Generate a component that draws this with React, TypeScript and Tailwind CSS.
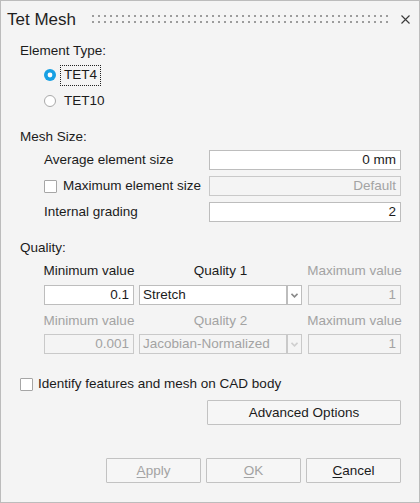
const ink = "text-[#1b1b1b]";
const faded = "text-[#a3a3a3]";

function Field({
  value,
  disabled = false,
  className = "",
}: {
  value: string;
  disabled?: boolean;
  className?: string;
}) {
  return (
    <div
      className={`flex h-[20px] items-center justify-end border pr-[4px] ${
        disabled ? `border-[#c9c9c9] bg-[#f4f4f4] ${faded}` : `border-[#bdbdbd] bg-white ${ink}`
      } ${className}`}
    >
      {value}
    </div>
  );
}

function Chevron({ color }: { color: string }) {
  return (
    <svg width="7" height="5" viewBox="0 0 7 5">
      <path d="M0.5 0.8 L3.5 3.8 L6.5 0.8" fill="none" stroke={color} strokeWidth="1.6" />
    </svg>
  );
}

function Combo({ value, disabled = false }: { value: string; disabled?: boolean }) {
  const box = disabled ? `border-[#c9c9c9] bg-[#f4f4f4] ${faded}` : `border-[#bdbdbd] bg-white ${ink}`;
  return (
    <div className="ml-[5px] flex h-[20px] w-[163px]">
      <div className={`flex w-[148px] items-center border pl-[3px] ${box}`}>{value}</div>
      <div className={`flex w-[15px] items-center justify-center border ${box}`}>
        <Chevron color={disabled ? "#cfcfcf" : "#8a8a8a"} />
      </div>
    </div>
  );
}

function CheckBox() {
  return <span className="h-[13px] w-[13px] shrink-0 rounded-[1px] border border-[#a6a6a6] bg-white" />;
}

function Grip() {
  const dots = Array.from({ length: 50 }, (_, i) => i * 6);
  return (
    <svg width="296" height="8" viewBox="0 0 296 8" className="shrink-0">
      {dots.map((x) => (
        <g key={x} fill="#9c9c9c">
          <rect x={x} y="0" width="2" height="2" />
          <rect x={x} y="6" width="2" height="2" />
        </g>
      ))}
    </svg>
  );
}

function Button({ children, disabled = false, className = "" }: { children: React.ReactNode; disabled?: boolean; className?: string }) {
  return (
    <button
      type="button"
      className={`flex h-[25px] items-center justify-center rounded-[1px] border border-[#c2c2c2] bg-[#f6f6f6] ${
        disabled ? faded : ink
      } ${className}`}
    >
      {children}
    </button>
  );
}

function ColumnHeads({ middle, minFaded }: { middle: string; minFaded: boolean }) {
  return (
    <div className="ml-[24px] flex h-[20px] items-center whitespace-nowrap">
      <span className={`flex w-[90px] justify-center ${minFaded ? faded : ""}`}>Minimum value</span>
      <span className={`ml-[5px] flex w-[163px] justify-center ${minFaded ? faded : ""}`}>{middle}</span>
      <span className={`ml-[6px] flex w-[93px] justify-center ${faded}`}>Maximum value</span>
    </div>
  );
}

export default function App() {
  return (
    <div className="box-border flex h-[503px] w-[420px] flex-col border border-[#bcbcbc] bg-[#f4f4f4] font-['Liberation_Sans',Arial,sans-serif] text-[13.5px] leading-none text-[#1b1b1b]">
      <div className="flex h-[36px] shrink-0 items-center pl-[6px]">
        <span className="w-[85px] shrink-0 text-[17px] text-[#1f1f1f]">Tet Mesh</span>
        <Grip />
        <svg width="9" height="9" viewBox="0 0 9 9" className="ml-[13px] shrink-0">
          <path d="M0.5 0.5 L8.5 8.5 M8.5 0.5 L0.5 8.5" stroke="#3a3a3a" strokeWidth="1.1" />
        </svg>
      </div>

      <div className="flex flex-col pl-[19px] pr-[18px]">
        <div className="flex h-[28px] items-center">Element Type:</div>

        <div className="ml-[24px] flex h-[20px] items-center">
          <svg width="12" height="12" viewBox="0 0 12 12" className="shrink-0">
            <circle cx="6" cy="6" r="6" fill="#17a0e3" />
            <circle cx="6" cy="6" r="2.4" fill="#fff" />
          </svg>
          <span className="ml-[4px] flex h-[21px] items-center border border-dotted border-[#222] px-[3px]">TET4</span>
        </div>

        <div className="ml-[24px] mt-[6px] flex h-[20px] items-center">
          <span className="h-[12px] w-[12px] shrink-0 rounded-full border border-[#a9a9a9] bg-white" />
          <span className="ml-[8px]">TET10</span>
        </div>

        <div className="mt-[16px] flex h-[20px] items-center">Mesh Size:</div>

        <div className="ml-[24px] mt-[3px] flex items-center">
          <span className="w-[165px]">Average element size</span>
          <Field value="0 mm" className="w-[192px]" />
        </div>
        <div className="ml-[24px] mt-[6px] flex items-center">
          <span className="flex w-[165px] items-center whitespace-nowrap">
            <CheckBox />
            <span className="ml-[6px]">Maximum element size</span>
          </span>
          <Field value="Default" disabled className="w-[192px]" />
        </div>
        <div className="ml-[24px] mt-[6px] flex items-center">
          <span className="w-[165px]">Internal grading</span>
          <Field value="2" className="w-[192px]" />
        </div>

        <div className="mt-[16px] flex h-[20px] items-center">Quality:</div>

        <div className="mt-[3px]">
          <ColumnHeads middle="Quality 1" minFaded={false} />
        </div>
        <div className="ml-[24px] mt-[4px] flex">
          <Field value="0.1" className="w-[90px]" />
          <Combo value="Stretch" />
          <Field value="1" disabled className="ml-[6px] w-[93px]" />
        </div>

        <div className="mt-[6px]">
          <ColumnHeads middle="Quality 2" minFaded />
        </div>
        <div className="ml-[24px] mt-[3px] flex">
          <Field value="0.001" disabled className="w-[90px]" />
          <Combo value="Jacobian-Normalized" disabled />
          <Field value="1" disabled className="ml-[6px] w-[93px]" />
        </div>

        <div className="mt-[20px] flex h-[20px] items-center">
          <CheckBox />
          <span className="ml-[5px]">Identify features and mesh on CAD body</span>
        </div>

        <div className="mt-[6px] flex justify-end">
          <Button className="w-[194px]">Advanced Options</Button>
        </div>

        <div className="mt-[33px] flex justify-end gap-[5px]">
          <Button disabled className="w-[95px]">
            <span className="underline underline-offset-2">A</span>pply
          </Button>
          <Button disabled className="w-[95px]">
            <span className="underline underline-offset-2">O</span>K
          </Button>
          <Button className="w-[95px]">
            <span className="underline underline-offset-2">C</span>ancel
          </Button>
        </div>
      </div>
    </div>
  );
}
